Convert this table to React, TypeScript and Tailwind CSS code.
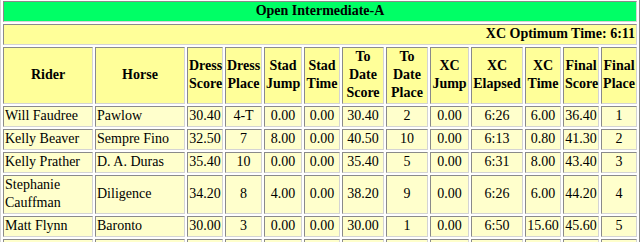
import React from 'react';

type Row = {
  rider: string;
  horse: string;
  dScore: string;
  dPlace: string;
  sJump: string;
  sTime: string;
  tdScore: string;
  tdPlace: string;
  xcJump: string;
  xcElapsed: string;
  xcTime: string;
  fScore: string;
  fPlace: string;
};

const rows: Row[] = [
  { rider: 'Will Faudree', horse: 'Pawlow', dScore: '30.40', dPlace: '4-T', sJump: '0.00', sTime: '0.00', tdScore: '30.40', tdPlace: '2', xcJump: '0.00', xcElapsed: '6:26', xcTime: '6.00', fScore: '36.40', fPlace: '1' },
  { rider: 'Kelly Beaver', horse: 'Sempre Fino', dScore: '32.50', dPlace: '7', sJump: '8.00', sTime: '0.00', tdScore: '40.50', tdPlace: '10', xcJump: '0.00', xcElapsed: '6:13', xcTime: '0.80', fScore: '41.30', fPlace: '2' },
  { rider: 'Kelly Prather', horse: 'D. A. Duras', dScore: '35.40', dPlace: '10', sJump: '0.00', sTime: '0.00', tdScore: '35.40', tdPlace: '5', xcJump: '0.00', xcElapsed: '6:31', xcTime: '8.00', fScore: '43.40', fPlace: '3' },
  { rider: 'Stephanie Cauffman', horse: 'Diligence', dScore: '34.20', dPlace: '8', sJump: '4.00', sTime: '0.00', tdScore: '38.20', tdPlace: '9', xcJump: '0.00', xcElapsed: '6:26', xcTime: '6.00', fScore: '44.20', fPlace: '4' },
  { rider: 'Matt Flynn', horse: 'Baronto', dScore: '30.00', dPlace: '3', sJump: '0.00', sTime: '0.00', tdScore: '30.00', tdPlace: '1', xcJump: '0.00', xcElapsed: '6:50', xcTime: '15.60', fScore: '45.60', fPlace: '5' },
];

// header labels, one entry per column (split on spaces -> wraps)
const headers = ['Rider', 'Horse', 'Dress Score', 'Dress Place', 'Stad Jump', 'Stad Time', 'To Date Score', 'To Date Place', 'XC Jump', 'XC Elapsed', 'XC Time', 'Final Score', 'Final Place'];
const colWidths = ['w-[90px]', 'w-[90px]', 'w-[36px]', 'w-[37px]', 'w-[38px]', 'w-[36px]', 'w-[42px]', 'w-[42px]', 'w-[39px]', 'w-[52px]', 'w-[36px]', 'w-[36px]', 'w-[36px]'];

const cell = 'border border-t-[#8a8a8a] border-l-[#8a8a8a] border-r-[#d4d4d4] border-b-[#d4d4d4] px-[1px] pt-0 pb-[1px]';

const App: React.FC = () => {
  return (
    <div className="bg-white min-h-screen font-['Liberation_Serif','Times_New_Roman',serif] text-[14px] leading-[18px] text-black">
      <table className="w-[640px] -mt-[2px] table-fixed border-separate border-spacing-[2px] border border-t-[#d4d4d4] border-l-[#d4d4d4] border-r-[#8a8a8a] border-b-[#8a8a8a]">
        <colgroup>
          {colWidths.map((w, i) => <col key={i} className={w} />)}
        </colgroup>
        <tbody>
          <tr>
            <td colSpan={13} className={`${cell} bg-[#00ff66] text-center font-bold`}>Open Intermediate-A</td>
          </tr>
          <tr>
            <td colSpan={13} className={`${cell} bg-[#ffff99] text-right font-bold`}>XC Optimum Time: 6:11</td>
          </tr>
          <tr>
            {headers.map(h => (
              <th key={h} className={`${cell} bg-[#ffff99] text-center align-middle font-bold`}>{h}</th>
            ))}
          </tr>
          {rows.map((r, i) => (
            <tr key={i} className="bg-[#ffffcc]">
              <td className={`${cell} text-left`}>{r.rider}</td>
              <td className={`${cell} text-left`}>{r.horse}</td>
              <td className={`${cell} text-center`}>{r.dScore}</td>
              <td className={`${cell} text-center`}>{r.dPlace}</td>
              <td className={`${cell} text-center`}>{r.sJump}</td>
              <td className={`${cell} text-center`}>{r.sTime}</td>
              <td className={`${cell} text-center`}>{r.tdScore}</td>
              <td className={`${cell} text-center`}>{r.tdPlace}</td>
              <td className={`${cell} text-center`}>{r.xcJump}</td>
              <td className={`${cell} text-center`}>{r.xcElapsed}</td>
              <td className={`${cell} text-center`}>{r.xcTime}</td>
              <td className={`${cell} text-center`}>{r.fScore}</td>
              <td className={`${cell} text-center`}>{r.fPlace}</td>
            </tr>
          ))}
          {/* next row runs off the bottom of the view */}
          <tr className="bg-[#ffffcc]">
            {headers.map(h => (
              <td key={h} className={cell}>{'\u00a0'}</td>
            ))}
          </tr>
        </tbody>
      </table>
    </div>
  );
};

export default App;
